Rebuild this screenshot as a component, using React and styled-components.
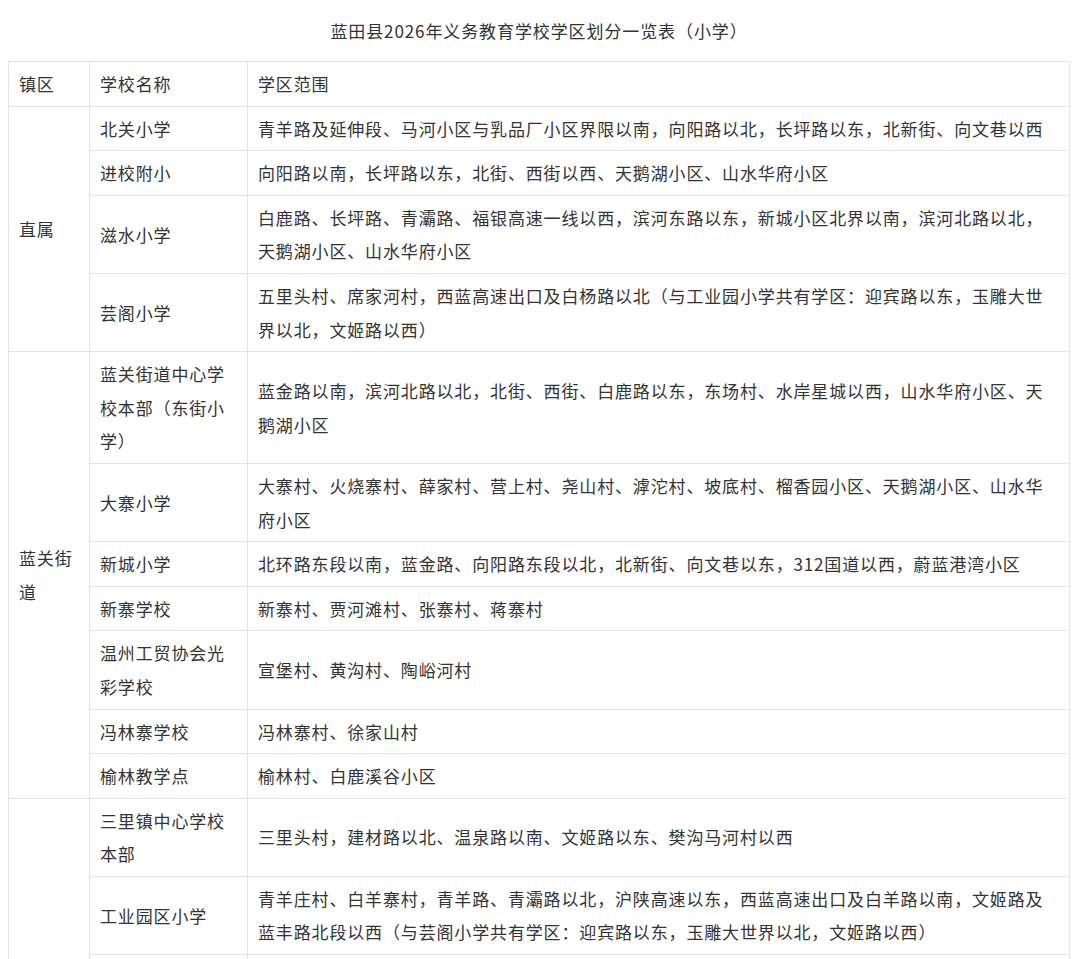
import React from "react";
import styled, { createGlobalStyle } from "styled-components";

const Global = createGlobalStyle`
  body { margin: 0; background: #fff; font-family: "Noto Sans CJK SC", "Liberation Sans", sans-serif; color: #333; }
`;
const Page = styled.div` padding: 0 10px 0 8px; height: 959px; overflow: hidden; `;
const Title = styled.div`
  height: 61px; display: flex; align-items: center; justify-content: center;
  font-size: 17px; color: #333; letter-spacing: 0.9px;
`;
const Table = styled.table`
  width: 1062px; border-collapse: collapse; table-layout: fixed;
`;
const Cell = styled.td`
  border: 1px solid #e3e3e3; padding: 5px 8px 5px 10px; font-size: 17px; line-height: 33.6px;
  letter-spacing: 0.85px; vertical-align: middle; color: #333; word-break: break-all;
  height: ${p => p.$h ? p.$h + "px" : "auto"};
`;

const rows = [
  ["直属", 4, "北关小学", "青羊路及延伸段、马河小区与乳品厂小区界限以南，向阳路以北，长坪路以东，北新街、向文巷以西"],
  [null, 0, "进校附小", "向阳路以南，长坪路以东，北街、西街以西、天鹅湖小区、山水华府小区"],
  [null, 0, "滋水小学", "白鹿路、长坪路、青灞路、福银高速一线以西，滨河东路以东，新城小区北界以南，滨河北路以北，天鹅湖小区、山水华府小区"],
  [null, 0, "芸阁小学", "五里头村、席家河村，西蓝高速出口及白杨路以北（与工业园小学共有学区：迎宾路以东，玉雕大世界以北，文姬路以西）"],
  ["蓝关街道", 7, "蓝关街道中心学校本部（东街小学）", "蓝金路以南，滨河北路以北，北街、西街、白鹿路以东，东场村、水岸星城以西，山水华府小区、天鹅湖小区"],
  [null, 0, "大寨小学", "大寨村、火烧寨村、薛家村、营上村、尧山村、滹沱村、坡底村、榴香园小区、天鹅湖小区、山水华府小区"],
  [null, 0, "新城小学", "北环路东段以南，蓝金路、向阳路东段以北，北新街、向文巷以东，312国道以西，蔚蓝港湾小区"],
  [null, 0, "新寨学校", "新寨村、贾河滩村、张寨村、蒋寨村"],
  [null, 0, "温州工贸协会光彩学校", "宣堡村、黄沟村、陶峪河村"],
  [null, 0, "冯林寨学校", "冯林寨村、徐家山村"],
  [null, 0, "榆林教学点", "榆林村、白鹿溪谷小区"],
  ["", 3, "三里镇中心学校本部", "三里头村，建材路以北、温泉路以南、文姬路以东、樊沟马河村以西"],
  [null, 0, "工业园区小学", "青羊庄村、白羊寨村，青羊路、青灞路以北，沪陕高速以东，西蓝高速出口及白羊路以南，文姬路及蓝丰路北段以西（与芸阁小学共有学区：迎宾路以东，玉雕大世界以北，文姬路以西）"],
  [null, 0, "", ""],
];

export default function App() {
  return (
    <Page>
      <Global />
      <Title>蓝田县2026年义务教育学校学区划分一览表（小学）</Title>
      <Table>
        <colgroup>
          <col style={{ width: 81 }} />
          <col style={{ width: 158 }} />
          <col />
        </colgroup>
        <tbody>
          <tr>
            <Cell>镇区</Cell>
            <Cell>学校名称</Cell>
            <Cell>学区范围</Cell>
          </tr>
          {rows.map(([town, span, school, area], i) => (
            <tr key={i}>
              {town !== null && <Cell rowSpan={span}>{town}</Cell>}
              <Cell $h={school === "" ? 44 : 0}>{school}</Cell>
              <Cell>{area}</Cell>
            </tr>
          ))}
        </tbody>
      </Table>
    </Page>
  );
}
